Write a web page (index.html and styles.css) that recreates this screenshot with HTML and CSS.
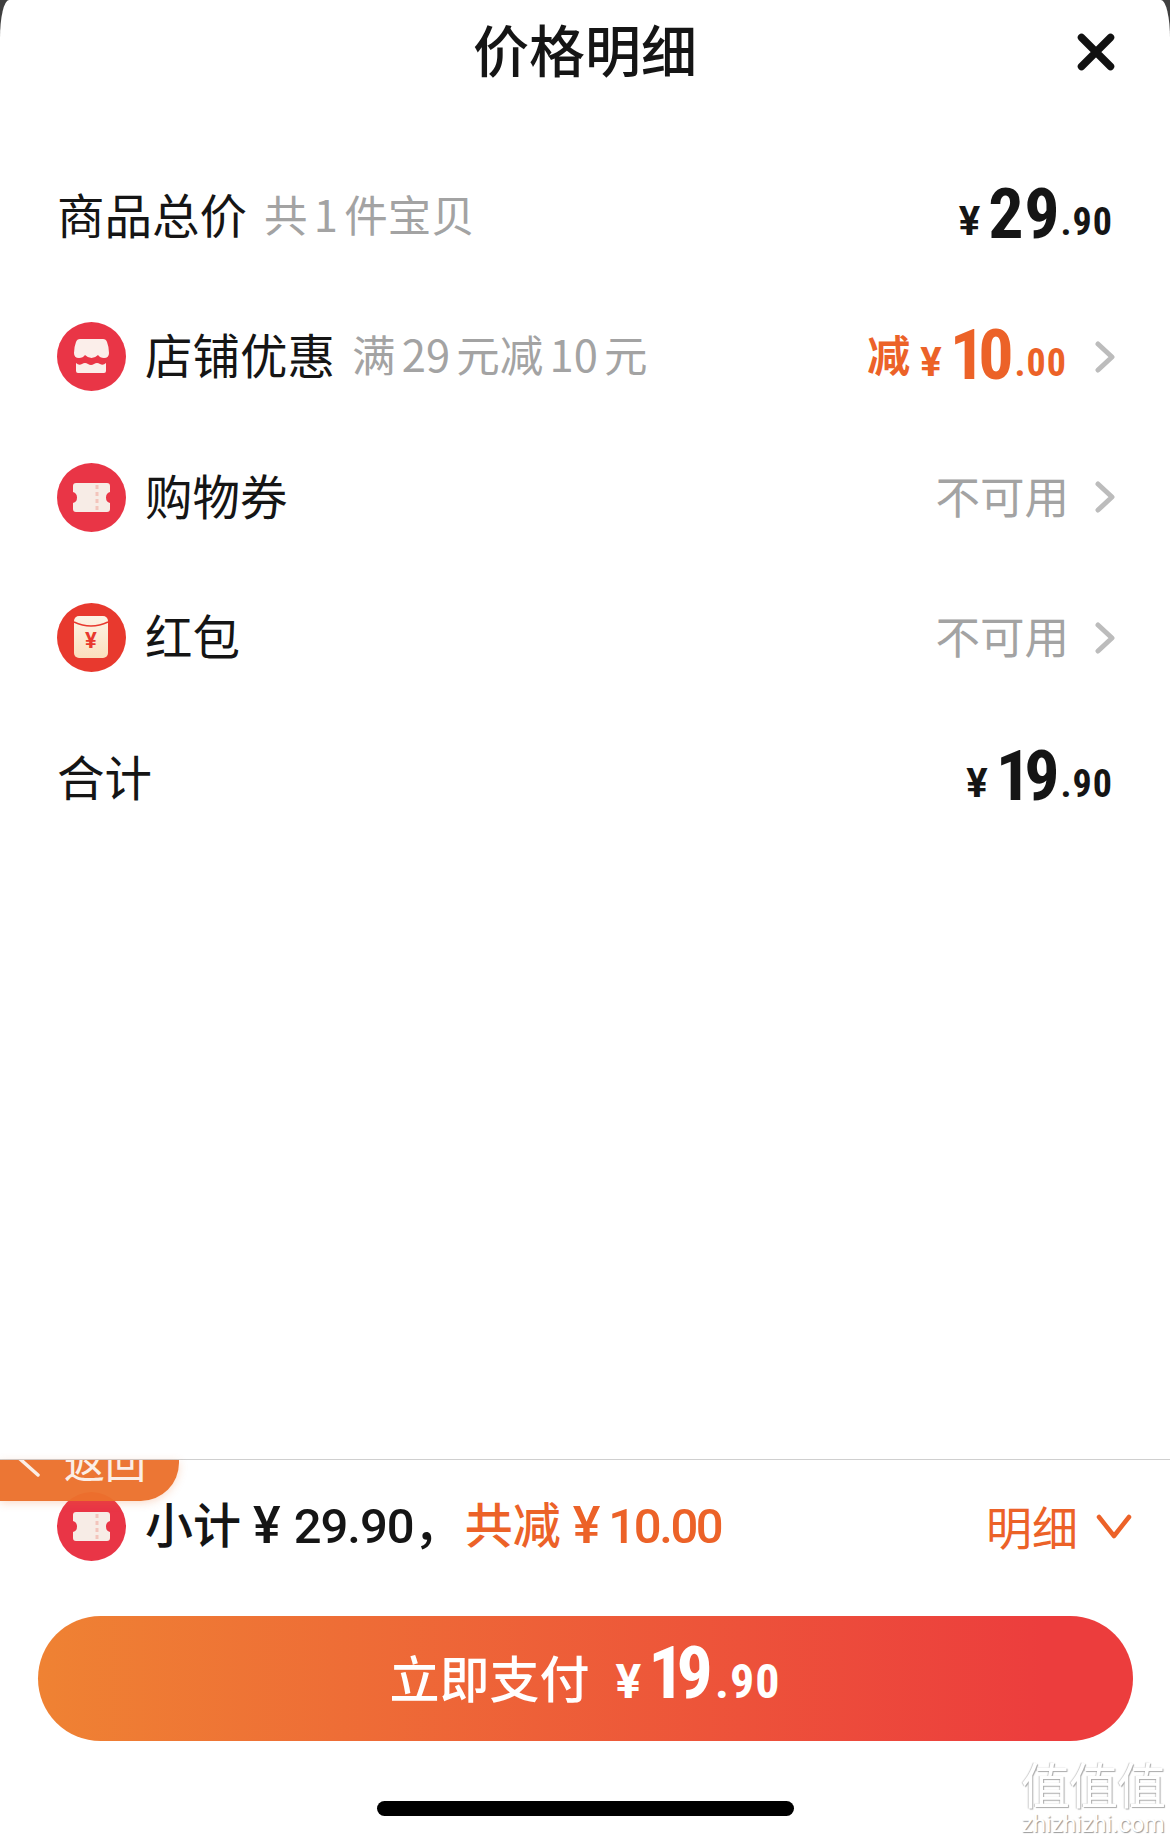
FILE: index.html
```html
<!DOCTYPE html>
<html>
<head>
  <title>价格明细</title>
  <meta charset="UTF-8" />
  <link rel="stylesheet" href="styles.css">
</head>
<body>
  <div class="sheet">
    <div class="head">
      <h1 class="head-title">价格明细</h1>
      <svg class="close" viewBox="0 0 38 38"><path d="M4.5 4.5 L33.5 33.5 M33.5 4.5 L4.5 33.5" /></svg>
    </div>

    <div class="rows">
      <div class="row">
        <span class="label">商品总价</span>
        <span class="note">共 1 件宝贝</span>
        <span class="price"><span class="yen">¥</span><span class="big">29</span><span class="cents">.90</span></span>
      </div>

      <div class="row">
        <svg class="badge" viewBox="0 0 69 69">
          <circle cx="34.5" cy="34.5" r="34.5" fill="#e93546" />
          <path fill="#fbeeea" d="M23 17 H46 Q49 17 50 20 Q52 25 52 31 Q52 36 47 36 Q43 36 41 33 Q38 36 34.5 36 Q31 36 28 33 Q26 36 22 36 Q17 36 17 31 Q17 25 19 20 Q20 17 23 17 Z" />
          <path fill="#fbeeea" d="M19 41 Q22 44 25 42 Q28 40 31 42 Q34 44 37 42 Q40 40 43 42 Q46 44 49 41 V49 Q49 51 47 51 H21 Q19 51 19 49 Z" />
        </svg>
        <span class="label">店铺优惠</span>
        <span class="note">满 29 元减 10 元</span>
        <span class="price orange"><span class="minus">减</span><span class="yen">¥</span><span class="big narrow">10</span><span class="cents">.00</span></span>
        <svg class="arrow" viewBox="0 0 20 32"><path d="M3 3 L17 16 L3 29" /></svg>
      </div>

      <div class="row">
        <svg class="badge" viewBox="0 0 69 69">
          <circle cx="34.5" cy="34.5" r="34.5" fill="#e93546" />
          <path fill="#f7ece6" d="M19 20 H50 Q53 20 53 23 V29 Q49 30 49 34.5 Q49 39 53 40 V46 Q53 49 50 49 H19 Q16 49 16 46 V40 Q20 39 20 34.5 Q20 30 16 29 V23 Q16 20 19 20 Z" />
          <path stroke="#f3c4bb" stroke-width="3" stroke-dasharray="4 3" d="M40 22 V48" />
        </svg>
        <span class="label">购物券</span>
        <span class="status">不可用</span>
        <svg class="arrow" viewBox="0 0 20 32"><path d="M3 3 L17 16 L3 29" /></svg>
      </div>

      <div class="row">
        <svg class="badge" viewBox="0 0 69 69">
          <defs>
            <linearGradient id="packet" x1="0" y1="0" x2="0" y2="1">
              <stop offset="0" stop-color="#fdf4e6" />
              <stop offset="1" stop-color="#fbdfbd" />
            </linearGradient>
          </defs>
          <circle cx="34.5" cy="34.5" r="34.5" fill="#e8392e" />
          <rect x="17" y="13" width="34" height="42" rx="5" fill="url(#packet)" />
          <path d="M17 19 Q34 27 51 19" fill="none" stroke="#e8392e" stroke-width="1.4" />
          <text x="34" y="45" class="packet-yen">¥</text>
        </svg>
        <span class="label">红包</span>
        <span class="status">不可用</span>
        <svg class="arrow" viewBox="0 0 20 32"><path d="M3 3 L17 16 L3 29" /></svg>
      </div>

      <div class="row">
        <span class="label">合计</span>
        <span class="price"><span class="yen">¥</span><span class="big narrow">19</span><span class="cents">.90</span></span>
      </div>
    </div>

    <div class="foot">
      <div class="summary">
        <svg class="badge" viewBox="0 0 69 69">
          <circle cx="34.5" cy="34.5" r="34.5" fill="#e93546" />
          <path fill="#f7ece6" d="M19 20 H50 Q53 20 53 23 V29 Q49 30 49 34.5 Q49 39 53 40 V46 Q53 49 50 49 H19 Q16 49 16 46 V40 Q20 39 20 34.5 Q20 30 16 29 V23 Q16 20 19 20 Z" />
          <path stroke="#f3c4bb" stroke-width="3" stroke-dasharray="4 3" d="M40 22 V48" />
        </svg>
        <span class="sum-text"><span class="sum-cjk">小计</span><span class="sum-yen">¥</span>29.90，</span>
        <span class="sum-text orange sum-off"><span class="sum-cjk">共减</span><span class="sum-yen">¥</span>10.00</span>
        <span class="detail orange">明细</span>
        <svg class="arrow-down" viewBox="0 0 36 26"><path d="M3 3 L18 22 L33 3" /></svg>
      </div>

      <button class="pay">
        <span class="pay-label">立即支付</span>
        <span class="yen">¥</span><span class="big narrow">19</span><span class="cents">.90</span>
      </button>

      <div class="home-bar"></div>
    </div>

    <!-- floating back tab, cut off by the footer line -->
    <div class="back">
      <svg class="back-arrow" viewBox="0 0 24 20"><path d="M2 -1 L20 15" /></svg>
      <span class="back-text">返回</span>
    </div>

    <div class="mark">
      <div class="mark-logo">值值值</div>
      <div class="mark-url">zhizhizhi.com</div>
    </div>
  </div>
</body>
</html>
```

FILE: styles.css
```css
:root {
  --text: #151515;
  --grey: #a3a3a3;
  --orange: #ec6228;
  --cjk: "Noto Sans CJK SC", sans-serif;
  --num: "Roboto", "Noto Sans CJK SC", sans-serif;
}

html, body {
  margin: 0;
  padding: 0;
  background-color: #3f3f3f;
}

body {
  font-family: var(--cjk);
  color: var(--text);
}

.sheet {
  position: relative;
  width: 1170px;
  height: 1840px;
  display: flex;
  flex-direction: column;
  background-color: #fff;
  border-radius: 9px 9px 0 0 / 38px 38px 0 0;
  overflow: hidden;
}

/* Header */
.head {
  height: 146px;
  flex: none;
  display: flex;
  align-items: flex-start;
  justify-content: center;
  position: relative;
}

.head-title {
  margin: 10px 0 0;
  font-size: 56px;
  line-height: 76px;
  font-weight: 500;
}

.close {
  position: absolute;
  left: 1077px;
  top: 33px;
  width: 38px;
  height: 38px;
  fill: none;
  stroke: #111;
  stroke-width: 7.5;
  stroke-linecap: round;
}

/* Rows */
.rows {
  display: flex;
  flex-direction: column;
}

.row {
  height: 140.5px;
  display: flex;
  align-items: center;
  padding: 0 55px 0 57px;
}

.badge {
  width: 69px;
  height: 69px;
  flex: none;
  margin-right: 19px;
}

.packet-yen {
  font-family: var(--num);
  font-size: 22px;
  font-weight: 700;
  fill: #e8392e;
  text-anchor: middle;
}

.label {
  font-size: 47.5px;
  line-height: 60px;
  margin-bottom: 5px;
}

.note {
  margin-left: 17px;
  margin-bottom: 5px;
  font-size: 43.5px;
  line-height: 60px;
  word-spacing: -3.5px;
  color: var(--grey);
}

.status {
  margin-left: auto;
  margin-bottom: 5px;
  font-size: 44.5px;
  line-height: 60px;
  color: var(--grey);
}

.price {
  margin-left: auto;
  margin-right: 2px;
  margin-bottom: 4px;
  white-space: nowrap;
  font-family: var(--num);
  font-weight: 700;
}

.price .yen {
  font-size: 40px;
  margin-right: 8px;
  vertical-align: 3px;
}

.price .big {
  font-size: 70px;
  font-stretch: 85%;
  letter-spacing: 0.5px;
}

.price .cents {
  font-size: 38px;
  font-stretch: 85%;
  letter-spacing: 1px;
  margin-left: 0.5px;
  vertical-align: 3px;
}

/* the reference's digit 1 is narrower than Roboto's */
.price .big.narrow {
  letter-spacing: -7px;
  margin-right: 7.5px;
}

.orange {
  color: var(--orange);
}

.minus {
  font-family: var(--cjk);
  font-size: 43px;
  margin-right: 10px;
  vertical-align: 7px;
}

.arrow {
  width: 20px;
  height: 32px;
  margin-left: 26px;
  fill: none;
  stroke: #bcbcbc;
  stroke-width: 5;
  stroke-linecap: round;
  stroke-linejoin: round;
}

/* Footer */
.foot {
  margin-top: auto;
  height: 381px;
  flex: none;
  box-sizing: border-box;
  border-top: 1px solid #cfcfcf;
  display: flex;
  flex-direction: column;
  align-items: center;
}

.summary {
  align-self: stretch;
  height: 133px;
  flex: none;
  display: flex;
  align-items: center;
  padding: 0 38px 0 57px;
}

.sum-text {
  margin-bottom: 10px;
  font-family: var(--num);
  font-size: 49px;
  font-weight: 500;
  letter-spacing: -1px;
  white-space: nowrap;
}

.sum-cjk {
  font-family: var(--cjk);
  font-size: 48px;
  letter-spacing: 0;
}

.sum-yen {
  font-size: 52px;
  letter-spacing: 0;
  margin: 0 13px 0 12px;
}

.sum-off {
  margin-left: 3px;
  letter-spacing: -2.4px;
}

.sum-off .sum-yen {
  margin-right: 8px;
}

.detail {
  margin-left: auto;
  margin-bottom: 4px;
  font-size: 46px;
}

.arrow-down {
  width: 36px;
  height: 26px;
  margin-left: 18px;
  fill: none;
  stroke: var(--orange);
  stroke-width: 4.5;
  stroke-linecap: round;
  stroke-linejoin: round;
}

.pay {
  width: 1095px;
  height: 125px;
  margin-top: 23px;
  flex: none;
  border: none;
  border-radius: 63px;
  background: linear-gradient(90deg, #ef8233 0%, #ec3d3d 92%);
  color: #fff;
  display: flex;
  align-items: baseline;
  justify-content: center;
  padding: 15px 0 0;
  font-family: var(--num);
  font-weight: 700;
}

.pay-label {
  font-family: var(--cjk);
  font-size: 50px;
  font-weight: 500;
  margin-right: 26px;
}

.pay .yen {
  font-size: 48px;
  margin-right: 7px;
}

.pay .big {
  font-size: 72px;
  font-stretch: 85%;
  letter-spacing: -8px;
  margin-right: 5px;
}

.pay .cents {
  font-size: 48px;
  font-stretch: 85%;
  letter-spacing: 1px;
  margin-left: 5px;
}

.home-bar {
  width: 417px;
  height: 15px;
  margin-top: 60px;
  border-radius: 8px;
  background-color: #000;
}

/* Back tab */
.back {
  position: absolute;
  left: 0;
  top: 1460px;
  width: 179px;
  height: 41px;
  overflow: hidden;
  background-color: rgba(235, 112, 44, 0.96);
  border-radius: 0 0 38px 0;
  box-shadow: 0 2px 8px rgba(236, 113, 44, 0.25);
  color: #fbeee5;
}

.back-arrow {
  position: absolute;
  left: 18px;
  top: 0;
  width: 24px;
  height: 20px;
  fill: none;
  stroke: #fbeee5;
  stroke-width: 3.5;
  stroke-linecap: round;
}

.back-text {
  position: absolute;
  left: 64px;
  top: -28px;
  font-size: 41px;
  line-height: 56px;
}

/* Watermark */
.mark {
  position: absolute;
  left: 1020px;
  top: 1752px;
  width: 146px;
  text-align: center;
  color: #fff;
}

.mark-logo {
  font-size: 49px;
  line-height: 62px;
  letter-spacing: -1px;
  text-shadow: 1px 1px 1px #aaa, -1px 0 1px #ccc;
}

.mark-url {
  font-family: "Roboto", sans-serif;
  font-size: 23.5px;
  line-height: 20px;
  text-shadow: 1px 1px 1px #999;
}
```
